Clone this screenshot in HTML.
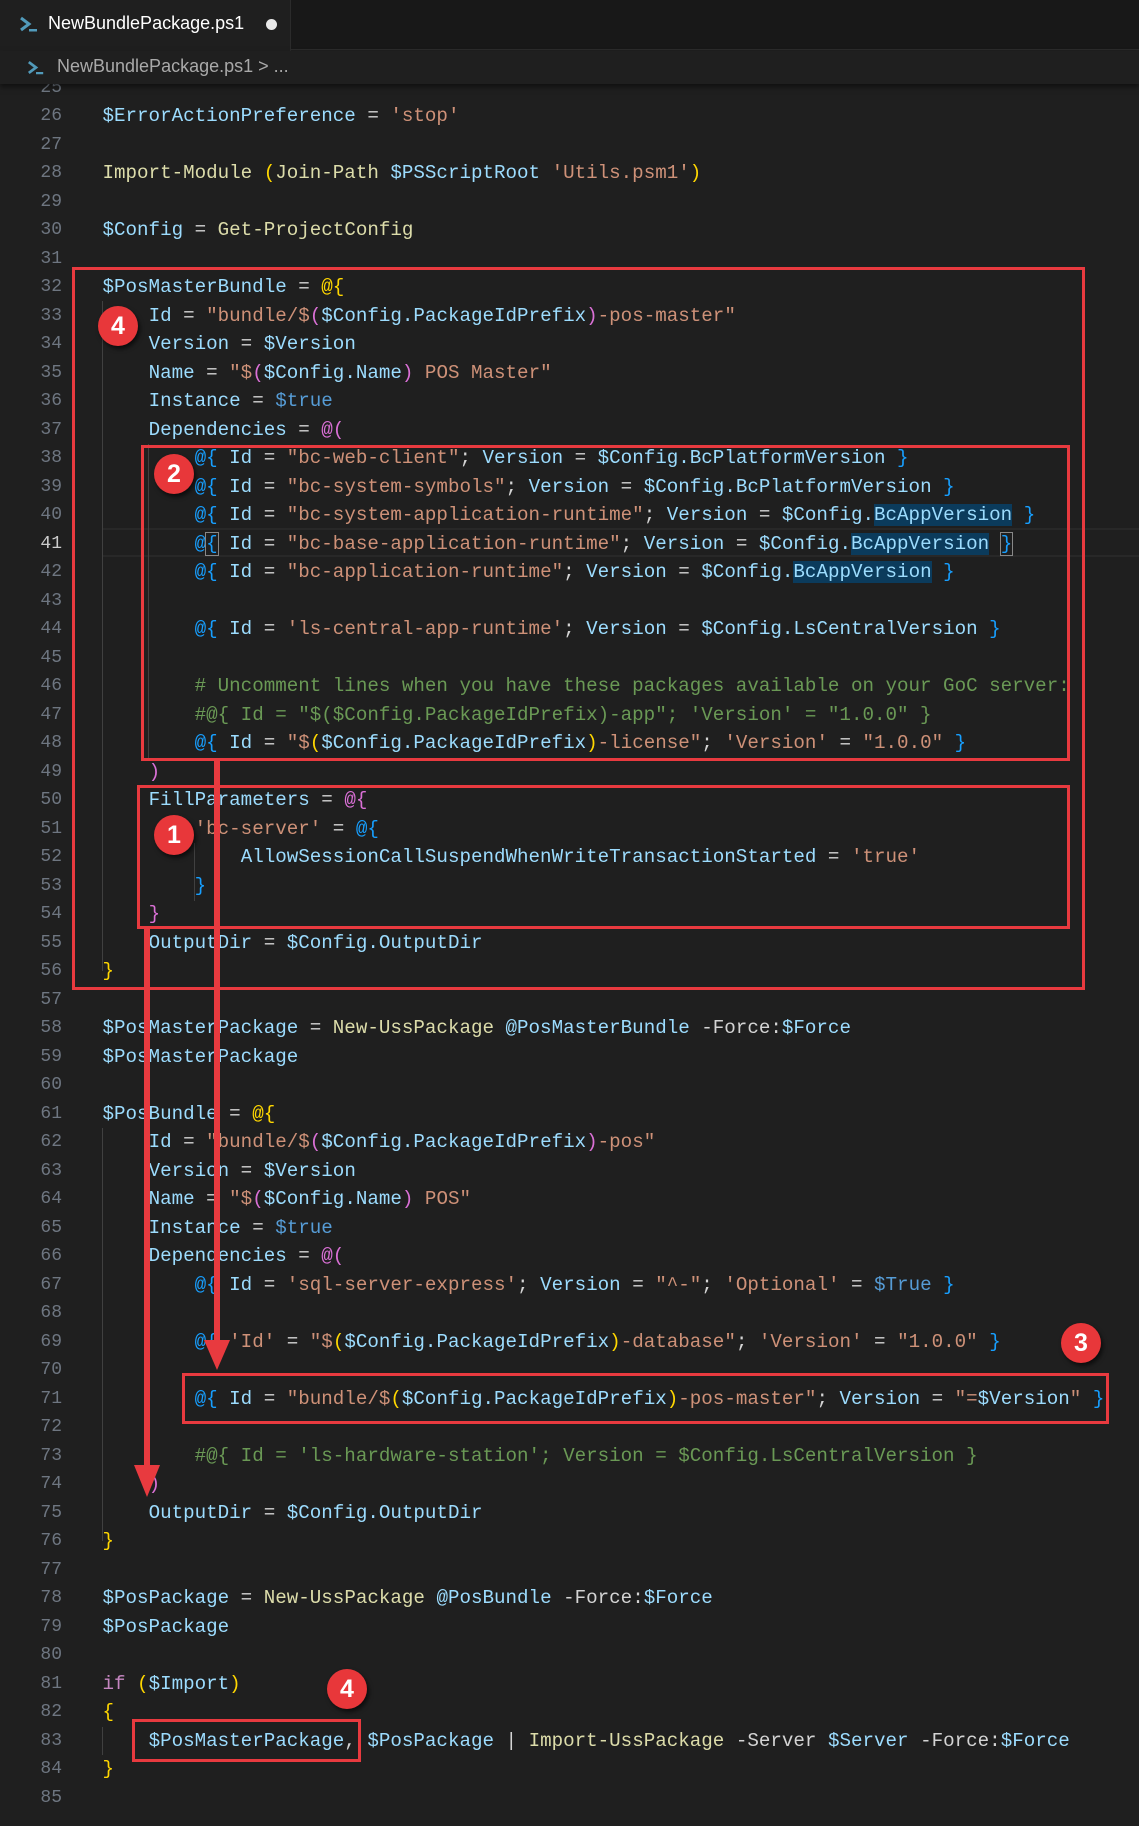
<!DOCTYPE html>
<html><head><meta charset="utf-8"><style>
*{margin:0;padding:0;box-sizing:border-box}
body{width:1139px;height:1826px;background:#1f1f1f;overflow:hidden;position:relative;font-family:"Liberation Mono",monospace}
.tabbar{position:absolute;left:0;top:0;width:1139px;height:50px;background:#181818;border-bottom:1px solid #2b2b2b}
.tab{position:absolute;left:0;top:0;width:291px;height:51px;background:#1f1f1f;border-right:1px solid #2b2b2b}
.tab .t{position:absolute;left:48px;top:13px;font:18px "Liberation Sans",sans-serif;color:#fff}
.dot{position:absolute;left:266px;top:19px;width:11px;height:11px;border-radius:50%;background:#e8e8e8}
.crumb{position:absolute;left:0;top:51px;width:1139px;height:33px;background:#1f1f1f;box-shadow:0 3px 5px rgba(0,0,0,.5);z-index:3}
.crumb .t{position:absolute;left:57px;top:5px;font:18px "Liberation Sans",sans-serif;color:#a9a9a9}
.ln{position:absolute;left:0;width:62px;text-align:right;font-size:18px;color:#6e7681;line-height:28.5px}
.cl{position:absolute;left:102.5px;white-space:pre;font-size:19.2px;line-height:28.5px;color:#d4d4d4}
.v{color:#9cdcfe}.s{color:#ce9178}.f{color:#dcdcaa}.c{color:#6a9955}.k{color:#569cd6}.y{color:#ffd700}.p{color:#da70d6}.b{color:#179fff}.kw{color:#c586c0}
.sel{background:#0b3b5c}
.g{position:absolute;width:1px;background:#404040}
.box{position:absolute;border:3px solid #e83a3f;z-index:5}
.num{position:absolute;width:40px;height:40px;border-radius:50%;background:#e8373a;color:#fff;font:bold 25px "Liberation Sans",sans-serif;text-align:center;line-height:40px;box-shadow:2px 3px 4px rgba(0,0,0,.6);z-index:6}
</style></head><body>
<div class="tabbar"><div class="tab">
<svg style="position:absolute;left:19px;top:15px" width="20" height="18" viewBox="0 0 20 18"><path d="M2 3l8 6-8 6" stroke="#519aba" stroke-width="3" fill="none"/><rect x="10" y="14" width="8" height="2.5" fill="#519aba"/></svg>
<span class="t">NewBundlePackage.ps1</span><div class="dot"></div></div></div>
<div class="crumb"><svg style="position:absolute;left:27px;top:8px" width="18" height="17" viewBox="0 0 20 18"><path d="M2 3l8 6-8 6" stroke="#519aba" stroke-width="3" fill="none"/><rect x="10" y="14" width="8" height="2.5" fill="#519aba"/></svg><span class="t">NewBundlePackage.ps1 &gt; ...</span></div>

<div style="position:absolute;left:102px;top:528px;width:1037px;height:29px;border-top:2px solid #282828;border-bottom:2px solid #282828"></div>

<div class="g" style="left:102px;top:301px;height:670px"></div>
<div class="g" style="left:148px;top:444px;height:314px"></div>
<div class="g" style="left:194px;top:843px;height:58px"></div>
<div class="g" style="left:102px;top:1128px;height:413px"></div>
<div class="g" style="left:148px;top:1271px;height:213px"></div>
<div class="g" style="left:102px;top:1727px;height:28px"></div>

<div id="code"></div>
<script>
const L={
25:'',
26:'<span class="v">$ErrorActionPreference</span> = <span class="s">\'stop\'</span>',
28:'<span class="f">Import-Module</span> <span class="y">(</span><span class="f">Join-Path</span> <span class="v">$PSScriptRoot</span> <span class="s">\'Utils.psm1\'</span><span class="y">)</span>',
30:'<span class="v">$Config</span> = <span class="f">Get-ProjectConfig</span>',
32:'<span class="v">$PosMasterBundle</span> = <span class="y">@{</span>',
33:'    <span class="v">Id</span> = <span class="s">"bundle/$</span><span class="p">(</span><span class="v">$Config.PackageIdPrefix</span><span class="p">)</span><span class="s">-pos-master"</span>',
34:'    <span class="v">Version</span> = <span class="v">$Version</span>',
35:'    <span class="v">Name</span> = <span class="s">"$</span><span class="p">(</span><span class="v">$Config.Name</span><span class="p">)</span><span class="s"> POS Master"</span>',
36:'    <span class="v">Instance</span> = <span class="k">$true</span>',
37:'    <span class="v">Dependencies</span> = <span class="p">@(</span>',
38:'        <span class="b">@{</span> <span class="v">Id</span> = <span class="s">"bc-web-client"</span>; <span class="v">Version</span> = <span class="v">$Config.BcPlatformVersion</span> <span class="b">}</span>',
39:'        <span class="b">@{</span> <span class="v">Id</span> = <span class="s">"bc-system-symbols"</span>; <span class="v">Version</span> = <span class="v">$Config.BcPlatformVersion</span> <span class="b">}</span>',
40:'        <span class="b">@{</span> <span class="v">Id</span> = <span class="s">"bc-system-application-runtime"</span>; <span class="v">Version</span> = <span class="v">$Config.<span class="sel">BcAppVersion</span></span> <span class="b">}</span>',
41:'        <span class="b">@<span style="outline:1px solid #888">{</span></span> <span class="v">Id</span> = <span class="s">"bc-base-application-runtime"</span>; <span class="v">Version</span> = <span class="v">$Config.<span class="sel">BcAppVersion</span></span> <span class="b" style="outline:1px solid #888">}</span>',
42:'        <span class="b">@{</span> <span class="v">Id</span> = <span class="s">"bc-application-runtime"</span>; <span class="v">Version</span> = <span class="v">$Config.<span class="sel">BcAppVersion</span></span> <span class="b">}</span>',
44:'        <span class="b">@{</span> <span class="v">Id</span> = <span class="s">\'ls-central-app-runtime\'</span>; <span class="v">Version</span> = <span class="v">$Config.LsCentralVersion</span> <span class="b">}</span>',
46:'        <span class="c"># Uncomment lines when you have these packages available on your GoC server:</span>',
47:'        <span class="c">#@{ Id = "$($Config.PackageIdPrefix)-app"; \'Version\' = "1.0.0" }</span>',
48:'        <span class="b">@{</span> <span class="v">Id</span> = <span class="s">"$</span><span class="y">(</span><span class="v">$Config.PackageIdPrefix</span><span class="y">)</span><span class="s">-license"</span>; <span class="s">\'Version\'</span> = <span class="s">"1.0.0"</span> <span class="b">}</span>',
49:'    <span class="p">)</span>',
50:'    <span class="v">FillParameters</span> = <span class="p">@{</span>',
51:'        <span class="s">\'bc-server\'</span> = <span class="b">@{</span>',
52:'            <span class="v">AllowSessionCallSuspendWhenWriteTransactionStarted</span> = <span class="s">\'true\'</span>',
53:'        <span class="b">}</span>',
54:'    <span class="p">}</span>',
55:'    <span class="v">OutputDir</span> = <span class="v">$Config.OutputDir</span>',
56:'<span class="y">}</span>',
58:'<span class="v">$PosMasterPackage</span> = <span class="f">New-UssPackage</span> <span class="v">@PosMasterBundle</span> -Force:<span class="v">$Force</span>',
59:'<span class="v">$PosMasterPackage</span>',
61:'<span class="v">$PosBundle</span> = <span class="y">@{</span>',
62:'    <span class="v">Id</span> = <span class="s">"bundle/$</span><span class="p">(</span><span class="v">$Config.PackageIdPrefix</span><span class="p">)</span><span class="s">-pos"</span>',
63:'    <span class="v">Version</span> = <span class="v">$Version</span>',
64:'    <span class="v">Name</span> = <span class="s">"$</span><span class="p">(</span><span class="v">$Config.Name</span><span class="p">)</span><span class="s"> POS"</span>',
65:'    <span class="v">Instance</span> = <span class="k">$true</span>',
66:'    <span class="v">Dependencies</span> = <span class="p">@(</span>',
67:'        <span class="b">@{</span> <span class="v">Id</span> = <span class="s">\'sql-server-express\'</span>; <span class="v">Version</span> = <span class="s">"^-"</span>; <span class="s">\'Optional\'</span> = <span class="k">$True</span> <span class="b">}</span>',
69:'        <span class="b">@{</span> <span class="s">\'Id\'</span> = <span class="s">"$</span><span class="y">(</span><span class="v">$Config.PackageIdPrefix</span><span class="y">)</span><span class="s">-database"</span>; <span class="s">\'Version\'</span> = <span class="s">"1.0.0"</span> <span class="b">}</span>',
71:'        <span class="b">@{</span> <span class="v">Id</span> = <span class="s">"bundle/$</span><span class="y">(</span><span class="v">$Config.PackageIdPrefix</span><span class="y">)</span><span class="s">-pos-master"</span>; <span class="v">Version</span> = <span class="s">"=</span><span class="v">$Version</span><span class="s">"</span> <span class="b">}</span>',
73:'        <span class="c">#@{ Id = \'ls-hardware-station\'; Version = $Config.LsCentralVersion }</span>',
74:'    <span class="p">)</span>',
75:'    <span class="v">OutputDir</span> = <span class="v">$Config.OutputDir</span>',
76:'<span class="y">}</span>',
78:'<span class="v">$PosPackage</span> = <span class="f">New-UssPackage</span> <span class="v">@PosBundle</span> -Force:<span class="v">$Force</span>',
79:'<span class="v">$PosPackage</span>',
81:'<span class="kw">if</span> <span class="y">(</span><span class="v">$Import</span><span class="y">)</span>',
82:'<span class="y">{</span>',
83:'    <span class="v">$PosMasterPackage</span>, <span class="v">$PosPackage</span> | <span class="f">Import-UssPackage</span> -Server <span class="v">$Server</span> -Force:<span class="v">$Force</span>',
84:'<span class="y">}</span>'
};
let h='';
for(let n=25;n<=85;n++){
 const t=73.5+(n-25)*28.5;
 h+=`<div class="ln" style="top:${t}px;${n==41?'color:#ccc':''}">${n}</div>`;
 if(L[n])h+=`<div class="cl" style="top:${t}px">${L[n]}</div>`;
}
document.getElementById('code').innerHTML=h;
</script>

<div class="box" style="left:72px;top:267px;width:1013px;height:723px"></div>
<div class="box" style="left:141px;top:445px;width:929px;height:316px"></div>
<div class="box" style="left:137px;top:785px;width:933px;height:144px"></div>
<div class="box" style="left:182px;top:1373px;width:927px;height:51px"></div>
<div class="box" style="left:132px;top:1719px;width:229px;height:43px"></div>

<div class="num" style="left:98px;top:306px">4</div>
<div class="num" style="left:154px;top:454px">2</div>
<div class="num" style="left:154px;top:815px">1</div>
<div class="num" style="left:1061px;top:1323px">3</div>
<div class="num" style="left:327px;top:1669px">4</div>

<svg style="position:absolute;left:0;top:0;z-index:7" width="1139" height="1826">
<line x1="217" y1="760" x2="217" y2="1345" stroke="#e83a3f" stroke-width="6"/>
<polygon points="204,1340 230,1340 217,1370" fill="#e83a3f"/>
<line x1="147" y1="928" x2="147" y2="1470" stroke="#e83a3f" stroke-width="6"/>
<polygon points="134,1465 160,1465 147,1497" fill="#e83a3f"/>
</svg>
</body></html>
